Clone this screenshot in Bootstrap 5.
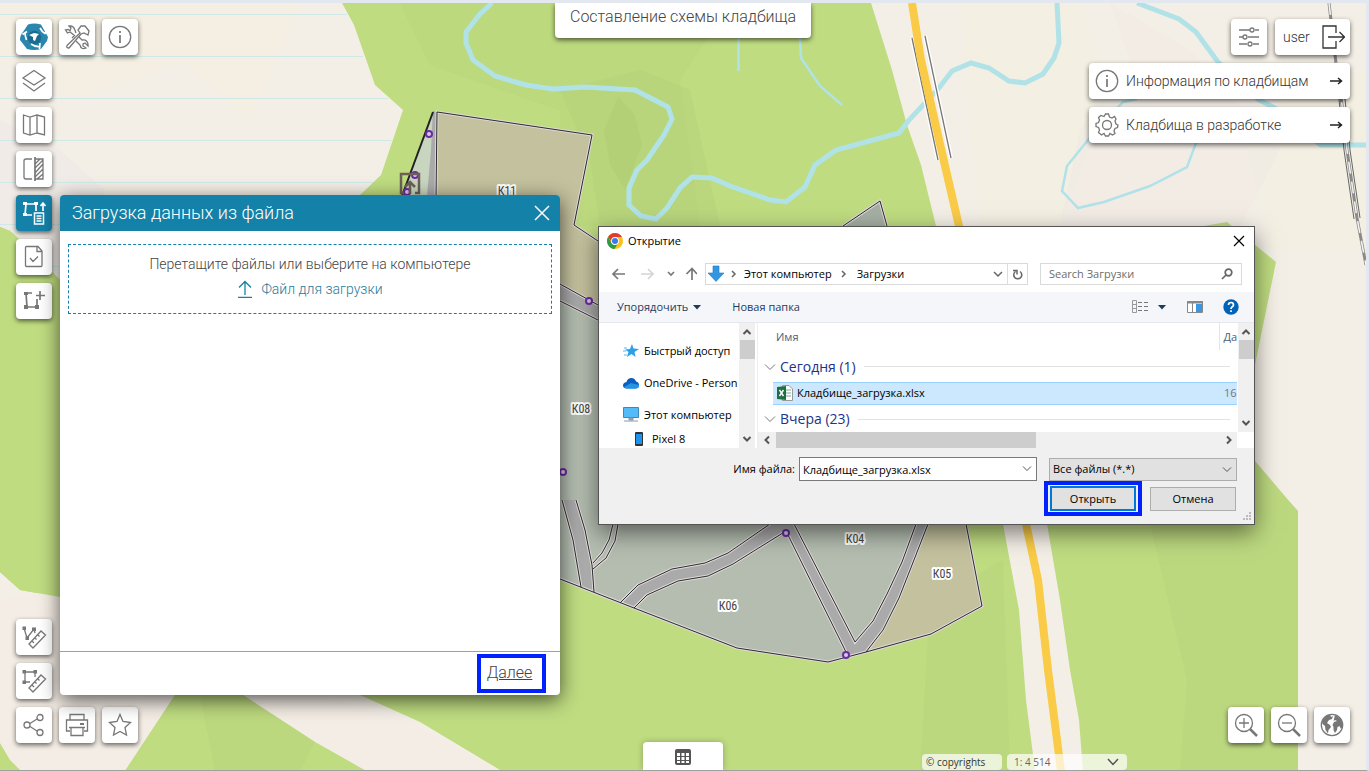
<!DOCTYPE html>
<html lang="ru">
<head>
<meta charset="utf-8">
<meta name="viewport" content="width=device-width, initial-scale=1">
<title>Составление схемы кладбища</title>
<link href="https://cdn.jsdelivr.net/npm/bootstrap@5.3.0/dist/css/bootstrap.min.css" rel="stylesheet">
<style>
:root{--teal:#1481a8;--ink:#444;--mark:#0022ff}
body{margin:0;background:#e9edf3;font-family:Roboto,"Open Sans",sans-serif;font-weight:300;color:var(--ink);font-size:14px;line-height:20px}
button,input,select{font-family:inherit;font-weight:inherit}
.app{height:100vh;min-height:700px;border-top:3px solid #e3e8f0;border-right:3px solid #e3e8f0;border-bottom:1px solid #a0a0a0;overflow:hidden}
.map{position:absolute;inset:0;width:100%;height:100%}
.over{position:relative}
.bar3{display:grid;grid-template-columns:1fr auto 1fr}
.trio{gap:7px}
.tile{min-width:36px;height:36px;padding:0;border:0;border-radius:4px;background:#fff;color:#777;box-shadow:0 2px 5px rgba(0,0,0,.6);display:flex;align-items:center;justify-content:center}
.tile svg{width:26px;height:26px;fill:none;stroke:currentColor;stroke-width:1.3}
.tile.on{background:var(--teal);color:#fff}
.tile.wide{width:261px;justify-content:flex-start;gap:6px;padding:0 7px 0 5px;font-size:14px}
.tile.wide span,.tile.user{color:#333}
.tile.user{width:75px;justify-content:space-between;padding:0 5px 0 8px;font-size:14px}
.heading{background:#fff;height:35px;padding:4px 15px;font-size:16px;line-height:20px;font-weight:300;border-radius:0 0 4px 4px;box-shadow:0 2px 5px rgba(0,0,0,.6)}
.tabgrid{width:80px;height:28px;border:0;background:#fff;border-radius:4px 4px 0 0;box-shadow:0 0 6px rgba(0,0,0,.25)}
.glass{height:16px;border-radius:4px;background:rgba(255,255,255,.7);font:400 10px/16px "Open Sans",sans-serif;color:#333}
.glass select{display:block;border:0;background:transparent;appearance:none;font:400 10px/16px "Open Sans",sans-serif;color:#666;width:120px;height:16px;padding:0 7px}
.panel{position:absolute;left:60px;top:192px;bottom:75px;width:500px;background:#fff;border-radius:4px;box-shadow:0 5px 20px rgba(0,0,0,.65)}
.panel-top{height:36px;background:var(--teal);color:#fff;border-radius:4px 4px 0 0;padding:0 9px 0 12px}
.panel-top h2{font-size:18px;line-height:36px;font-weight:300;margin:0}
.bare{border:0;background:transparent;padding:0;line-height:0;color:inherit}
.drop{margin:13px 8px;height:70px;border:1px dashed var(--teal);font-size:14px;line-height:20px;padding-top:9px}
.drop button{border:0;background:none;color:#1f7a98;font-size:14px;line-height:20px;padding:0;margin-top:5px}
.panel-foot{border-top:1px solid #a0a0a0;height:44px;padding:2px 14px 0 0}
.marked{border:4px solid var(--mark)}
.next{display:block;width:69px;height:39px;font-size:16px;line-height:29px;color:#444;text-align:center;padding-right:4px}
.dlg{position:absolute;left:598px;top:223px;width:657px;border:1px solid #555;background:#fff;color:#000;font:400 11px/16px "Open Sans",sans-serif;box-shadow:0 8px 22px rgba(0,0,0,.5)}
.dlg svg{flex:none;display:block}
.dlg-title{height:36px;padding:0 9px 8px 8px}
.dlg-title span{margin-left:5px}
.dlg-nav{height:22px;padding:0 12px 0 12px}
.box{border:1px solid #d9d9d9;height:22px}
.addr{width:323px;margin-left:8px}
.find{width:202px;margin-left:12px}
.find input{border:0;width:170px;padding:0 0 0 8px;font-size:11px;line-height:20px;height:20px;background:none}
.find input::placeholder{color:#6d6d6d;opacity:1}
.tools{margin-top:7px;height:31px;background:#f4f6f9;border-bottom:1px solid #e5e7ea;padding:0 15px 0 18px;color:#1e3a5f}
.tools button{color:#1e3a5f;line-height:16px}
.dlg-body{height:125px}
.tree{width:140px;padding:17px 0 0 24px;overflow:hidden;white-space:nowrap}
.tree li{display:flex;align-items:center;gap:5px;height:22px;margin-bottom:10px}
.tree li:nth-child(3){margin-bottom:2px}
.tree li.sub{padding-left:8px}
.vbar{width:16px;background:#f0f0f0;display:flex;flex-direction:column;align-items:center}
.vbar i{width:15px;height:19px;background:#cdcdcd;margin-top:1px}
.files{width:480px;margin-left:2px;border-left:1px solid #eee}
.ftab{width:479px;height:109px;table-layout:fixed;border-collapse:collapse}
.ftab td,.ftab th{padding:0;font-weight:400;white-space:nowrap;overflow:hidden}
.ftab th{color:#4c607a;height:27px}
.ftab .cut{border-left:1px solid #e5e5e5;padding-left:4px}
.grp{display:flex;align-items:center;gap:4px;font-size:14px;line-height:20px;color:#1e3287;padding:2px 7px 0 6px}
.grp hr{flex:1;margin:0 0 0 4px;border-color:#ccc;opacity:1;border-top:1px solid #e2e2e2}
.ftab .pick{background:#cce8ff;border-top:1px solid #99d1ff;border-bottom:1px solid #99d1ff}
.hbar{height:16px;background:#f0f0f0;padding:0 4px 0 5px}
.hbar i{width:260px;height:16px;background:#cdcdcd;margin-left:5px}
.dlg-foot{background:#f0f0f0;height:76px;padding:9px 17px 0 0}
.fname{width:238px;height:24px;border:1px solid #7a7a7a;background:#fff}
.fname input{border:0;width:100%;height:22px;padding:0 3px;font-size:11px;background:none}
.ftype{width:188px;height:23px;border:1px solid #adadad;background:#e1e1e1;margin-left:12px}
.ftype select{display:block;appearance:none;border:0;background:none;width:100%;height:21px;padding:0 3px;font-size:11px;color:#000}
.over-chev{position:absolute;right:4px;top:7px;pointer-events:none}
.okc{width:98px;height:35px;padding:1px 2px}
.wbtn{border:1px solid #adadad;background:#e1e1e1;width:86px;height:24px;padding:0;font-size:11px;line-height:16px;color:#000}
.okc .wbtn{border:2px solid #0078d7;width:86px;height:25px}
.grip{position:absolute;right:2px;bottom:2px}
</style>
</head>
<body>
<div class="app position-relative d-flex flex-column justify-content-between">
<svg class="map" viewBox="0 3 1366 767" preserveAspectRatio="xMidYMid slice" aria-hidden="true">
  <rect width="1366" height="771" fill="#f4efe6"/>
  <path d="M0 3H300L250 120 180 60 80 100 0 60z" fill="#f4efe0" opacity=".7"/>
  <path d="M960 3H1080L1110 90 1060 226H980z M1240 120L1366 70V250H1270z" fill="#f3efe1" opacity=".8"/>
  <path d="M1110 3L1190 50 1280 150 1240 226H1060L1080 130 1130 60z" fill="#f0eae4" opacity=".6"/>
  <path d="M0 120L60 150 105 190 60 300 0 240z" fill="#eeeae5" opacity=".7"/>
  <path d="M0 14.500H347M0 56.500H363M0 98.500H388M0 140.500H392M0 182.500H374M0 224.500H60M0 266.500H60" stroke="#cfe9e8" fill="none"/>
  <!-- forest -->
  <path d="M342 3L354 25 375 85 403 110 381 175 359 196 200 400 60 280 18 238 10 231 0 227V572L20 590 60 597 175 695 125 770H366L315 742 243 695H360L420 722 500 770H1035L1026 700 1019 610 1003 524 936 226 921 165 907 125 892 70 871 3z" fill="#bfdc81"/>
  <path d="M60 280L60 590 20 596 0 600V771H125L175 695 243 695 315 742 366 771H500L410 722 320 695 240 650z" fill="#f4ede5"/>
  <path d="M60 280L18 238 10 231 0 227V572L20 590 60 597z M175 695L125 771H366L315 742 243 695z M0 743L10 760 21 771H0z" fill="#bfdc81"/>
  <path d="M1047 524L1060 600 1070 670 1079 720 1083 771H1298V511L1288 500 1255 461 1180 400 1255 365 1276 262 1227 222 1198 227 1040 460z" fill="#bfdc81"/>
  <path d="M560 90L640 70 690 90 720 226H600L590 160z" fill="#b2cf78" opacity=".35"/>
  <path d="M400 3L430 65 500 90 560 110 560 226H700L680 80 730 3z" fill="#b5d078" opacity=".25"/>
  <path d="M618 96L635 115 642 145 625 190 610 165 604 130z" fill="#a9c871" opacity=".35"/>
  <path d="M1150 524L1187 680 1180 771H1298V511L1255 461z M200 695H243L315 742 300 771H215z M930 600L1003 560 1010 771H920z" fill="#b8d27b" opacity=".35"/>
  <!-- water -->
  <g fill="none" stroke="#b0e2e8" stroke-width="5">
    <path d="M492 3L480 14 466 32V43L473 60 495 76 526 85 553 89 585 87 635 90 668 107 672 119 664 135 647 160 637 170 629 188V205L641 216 656 219 667 208 680 188 692 177 712 178 730 186 770 200 786 202 805 187 815 165 836 150 899 133 909 120 925 103 939 88 952 71 971 63 989 68 1009 81 1025 83 1043 74 1054 58 1059 43 1057 3"/>
    <path d="M1137 3L1179 19 1196 32 1218 62 1259 100 1275 108 1321 145H1366"/>
    <path d="M738.500 3V71M798 3L801 58 820 86 842 105M1137 99L1123 102 1088 140 1067 166 1062 191 1078 208 1104 202 1150 186 1187 167 1196 143 1210 110" stroke-width="2.500"/>
  </g>
  <!-- roads -->
  <path d="M912 38L938 160M925 36L951 158" stroke="#fff" stroke-width="4"/>
  <path d="M912 38L938 160M925 36L951 158" stroke="#777" stroke-width="1.300"/>
  <path d="M912 3L921 60 939 140 959 226 1026 524 1038 580 1048 670 1061 771" stroke="#f9cb47" stroke-width="8" fill="none"/>
  <path d="M1329 3L1336 63 1342 105 1347 150 1357 218 1366 265" stroke="#8a8a8a" stroke-width="3" fill="none"/>
  <path d="M1329 3L1336 63 1342 105 1347 150 1357 218 1366 265" stroke="#f4f4f4" stroke-width="1.500" stroke-dasharray="12 8" fill="none"/>
  <path d="M1339 99L1344 150 1354 219M1345 99L1350 150 1360 218" stroke="#666" fill="none"/>
  <!-- cemetery -->
  <path d="M433 111L592 135 574 225 598 241 843 226 880 201 887 226 966 524 982 606 931 634 866 652 828 662 737 648 634 608 560 579 420 240 402 196z" fill="#b4bdb0"/>
  <path d="M433 111L402 196H430z" fill="#c8d6c0"/>
  <path d="M437 112L592 135 574 225 598 241V310L560 290 432 200z M928 524H966L982 606 931 634 866 652 883 630 899 598 912 565z" fill="#c4c19e"/>
  <path d="M880 201L843 226H887z" fill="#a6afa4"/>
  <path d="M433 111L437 112 436 196H427L431 150z M560 284L598 305V320L560 301z M562 500L573 540 581 587 594 592 592 565 585 530 576 500z M620 603L638 585 672 569 705 563 728 553 770 524H794L855 642 873 621 887 594 902 562 916 524H928L912 565 899 598 883 630 866 652 846 657V652L786 531 733 564 708 576 678 581 647 595 634 608z" fill="#aaa"/>
  <g fill="none">
    <g stroke="#ded9d5" stroke-width="3"><path id="ln" d="M436 200L437 112 592 135 574 225 598 241M843 226L880 201 887 226M560 284L598 305M560 301L598 320M562 500L573 540 581 587M576 500L585 530 592 565 594 592M593 569L606 558 615 541 618 524M593 563L602 553 609 540 613 524M620 603L638 585 672 569 705 563 728 553 770 524M794 524L855 642 873 621 887 594 902 562 916 524M634 608L647 595 678 581 708 576 733 564 786 531 846 652M866 652L883 630 899 598 912 565 928 524M560 579L634 608 737 648 828 662 866 652 931 634 982 606 966 524"/></g>
    <use href="#ln" stroke="#2b2b33"/>
    <path d="M433 112L402 196" stroke="#222" stroke-width="2"/>
  </g>
  <g fill="#d9c8ec" stroke="#6a2ca0" stroke-width="2"><circle cx="429" cy="134" r="3"/><circle cx="415" cy="175" r="3"/><circle cx="407" cy="192" r="3"/><circle cx="589" cy="301" r="3"/><circle cx="563" cy="472" r="3"/><circle cx="786" cy="533" r="3"/><circle cx="846" cy="655" r="3"/></g>
  <path d="M404 193H401V174H419V193H415M410 194V181M405 187L410 182 415 187" fill="none" stroke="#6d6055" stroke-width="2.500"/>
  <g font-family="'Liberation Sans Narrow','Roboto Condensed',Roboto,sans-serif" font-size="12" font-weight="400" fill="#444" stroke="#fff" stroke-width="4" stroke-linejoin="round" paint-order="stroke" text-anchor="middle"><text x="507" y="195">К11</text><text x="581" y="413">К08</text><text x="855" y="543">К04</text><text x="942" y="578">К05</text><text x="728" y="610">К06</text></g>
</svg>

<div class="over bar3 px-3">
  <div class="d-flex flex-column gap-2 mt-3 align-items-start">
    <div class="d-flex trio">
      <button class="tile" aria-label="Главная"><svg style="width:28px;height:28px" viewBox="0 0 28 28" stroke="none"><path d="M8 1.500Q14-.500 21 1.500L28 14 27 18 21 26Q14 28 7 26L0 17Q0 12 3 9z" fill="#2b86ad" stroke="none"/><circle cx="14.500" cy="14.500" r="6.800" fill="#1c6c91" stroke="none"/><path d="M2.500 11.500L7 8.500M5 9.500Q5 13 6.500 17M20 5Q22 9 25 10.500L27 8M11 21Q15 24 20 23.500M20 20L19.500 26" stroke="#fff" stroke-width="1.700" fill="none"/><path d="M9 12L14 10 19 11 17 13 15 18 13 17 13 14z" fill="#fff" stroke="none"/></svg></button>
      <button class="tile" aria-label="Инструменты"><svg viewBox="0 0 26 26"><path d="M3 21.500L16 9 14 6 17 2 21 2 25 7 24 11 20 9 17 10 5 24Q2 24 3 21.500z"/><path d="M8 14L10.500 11.500 6 8 3.500 9 1.500 6 4 5.500 6 6.500 7 4 5 2Q9 1 10.500 5L12 9M15 13L18 16Q23 15 24 20L24 22 21 19 19 20 19 22 22 24Q17 26 16 21L12 17"/></svg></button>
      <button class="tile" aria-label="Информация"><svg viewBox="0 0 26 26"><circle cx="13" cy="13" r="10.700"/><path d="M13 11V19M13 7V9" stroke-width="1.700"/></svg></button>
    </div>
    <button class="tile" aria-label="Слои"><svg viewBox="0 0 26 26"><path d="M13 2.500L24 10 13 17 2 10zM2 15L13 23 24 15"/></svg></button>
    <button class="tile" aria-label="Карта"><svg viewBox="0 0 26 26"><path d="M2.500 3L9 5 16 3 23.500 5V23L16 21 9 23 2.500 21zM9 5V23M16 3V21"/></svg></button>
    <button class="tile" aria-label="Сравнение"><svg viewBox="0 0 26 26"><path d="M11 3H5Q3 3 3 5V21Q3 23 5 23H11"/><path d="M14 1V25" stroke-width="1.700"/><path d="M14 3H22V23H14M14 8L19 3M14 12L22 4M14 17L22 8M14 21L22 13M16 23L22 18"/></svg></button>
    <button class="tile on" aria-label="Загрузка из файла"><svg viewBox="0 0 26 26" stroke-width="1.800"><path d="M11 15H4L5 4H15V11M22 11V3M19.500 6L22 3 24.500 6" stroke-width="1.700"/><path d="M2 2H6V5H2zM13 2H17V5H13zM2 13H6V16H2z" fill="currentColor" stroke="none"/><path d="M13.500 13H22.500V24H13.500zM15.500 16H20.500M15.500 18.500H20.500M15.500 21H20.500" stroke-width="1.500"/></svg></button>
    <button class="tile" aria-label="Проверка"><svg viewBox="0 0 26 26"><path d="M17 2.500H5.500Q4.500 2.500 4.500 3.500V21.500Q4.500 22.500 5.500 22.500H20Q21 22.500 21 21.500V7zM16 3V7.500H21M9 14L12 17.500 17 12.500"/></svg></button>
    <button class="tile" aria-label="Добавить"><svg viewBox="0 0 26 26"><path d="M11 5H5L6 19H16V11M19 3V12M15 7.500H24" stroke-width="1.700"/><path d="M3 4H7V7H3zM3 17H7V21H3zM14 17H18V21H14z" fill="currentColor" stroke="none"/></svg></button>
  </div>
  <h1 class="heading mb-0 align-self-start">Составление схемы кладбища</h1>
  <div class="d-flex flex-column gap-2 mt-3 align-items-end">
    <div class="d-flex gap-2">
      <button class="tile" aria-label="Настройки"><svg viewBox="0 0 26 26"><path d="M3 6H14M19 6H23M3 13H7M12 13H23M3 20H11M17 20H23"/><circle cx="16" cy="6" r="2"/><circle cx="9" cy="13" r="2"/><circle cx="14" cy="20" r="2"/></svg></button>
      <button class="tile user">user<svg viewBox="0 0 26 26"><path d="M17 9V2H4V24H17V17M9 13H25M20.500 8L25.500 13 20.500 18"/></svg></button>
    </div>
    <button class="tile wide"><svg viewBox="0 0 26 26"><circle cx="13" cy="13" r="10.700"/><path d="M13 11V19M13 7V9" stroke-width="1.700"/></svg><span>Информация по кладбищам</span><svg class="ms-auto" style="width:13px;height:12px;color:#222" viewBox="0 0 13 12"><path d="M0 6H11M8 3L11.500 6 8 9" stroke-width="1.500"/></svg></button>
    <button class="tile wide"><svg viewBox="0 0 26 26"><circle cx="13" cy="13" r="4.500"/><path d="M11.500 2H14.500L15.500 5 18 6 20.500 4.500 22 7 21 9 22 12 24 13 23.500 15.500 21 16.500 20 19 21 21.500 18.500 23 16 21.500 14.500 24H11.500L10 21.500 7.500 23 4.500 20.500 5.500 18 4.500 15.500 2 14.500V11.500L4.500 10.500 5.500 8 4.500 5.500 7 3.500 10 4.500z"/></svg><span>Кладбища в разработке</span><svg class="ms-auto" style="width:13px;height:12px;color:#222" viewBox="0 0 13 12"><path d="M0 6H11M8 3L11.500 6 8 9" stroke-width="1.500"/></svg></button>
  </div>
</div>

<div class="over bar3 px-3 align-items-end">
  <div class="d-flex flex-column gap-2 align-items-start" style="padding-bottom:27px">
    <button class="tile" aria-label="Измерить длину"><svg viewBox="0 0 26 26"><path d="M3 4L6 14 13 5 14 9M8 20L20 7 24.500 11 12 24zM11 17L13 19M14 14L15.500 15.500M17 11L18.500 12.500" /><path d="M1.500 2.500H5V6H1.500zM4.500 12.500H8V16H4.500zM11 3.500H15V7H11z" fill="currentColor" stroke="none"/></svg></button>
    <button class="tile" aria-label="Измерить площадь"><svg viewBox="0 0 26 26"><path d="M9 14H4V4H14V9M8 20L20 7 24.500 11 12 24zM11 17L13 19M14 14L15.500 15.500M17 11L18.500 12.500"/><path d="M1.500 2H5V5.500H1.500zM12.500 2H16V5.500H12.500zM1.500 12.500H5V16H1.500z" fill="currentColor" stroke="none"/></svg></button>
    <div class="d-flex trio">
      <button class="tile" aria-label="Поделиться"><svg viewBox="0 0 26 26"><circle cx="6" cy="13" r="3"/><circle cx="19" cy="5.500" r="3"/><circle cx="19" cy="20.500" r="3"/><path d="M9 11.500L16 7M9 14.500L16 19"/></svg></button>
      <button class="tile" aria-label="Печать"><svg viewBox="0 0 26 26"><path d="M6 8V2.500H20V8M6 19H2.500V8H23.500V19H20M7 15.500H19V23.500H7zM5 15.500H21"/><path d="M16 12H20" stroke-width="2"/></svg></button>
      <button class="tile" aria-label="Избранное"><svg viewBox="0 0 26 26"><path d="M13 2.500L16 9.500 23.500 10.500 18 15.500 19.500 23 13 19.500 6.500 23 8 15.500 2.500 10.500 10 9.500z"/></svg></button>
    </div>
  </div>
  <button class="tabgrid" aria-label="Таблица"><svg width="16" height="16" viewBox="0 0 16 16"><rect width="16" height="16" rx="2" fill="#555"/><path d="M2 4H5V7H2zM6.500 4H9.500V7H6.500zM11 4H14V7H11zM2 8H5V11H2zM6.500 8H9.500V11H6.500zM11 8H14V11H11zM2 12H5V14H2zM6.500 12H9.500V14H6.500zM11 12H14V14H11z" fill="#fff"/></svg></button>
  <div class="d-flex justify-content-end align-items-end">
    <div class="glass" style="width:80px;padding-left:4px">© copyrights</div>
    <div class="glass position-relative" style="margin:0 101px 0 5px"><select aria-label="Масштаб"><option>1: 4 514</option></select><svg class="over-chev" style="top:4px;right:8px" width="12" height="8"><path d="M1 1L6 6.500 11 1" fill="none" stroke="#555" stroke-width="1.500"/></svg></div>
    <div class="d-flex trio" style="padding-bottom:27px">
      <button class="tile" aria-label="Приблизить"><svg viewBox="0 0 26 26"><circle cx="11" cy="11" r="8.500"/><path d="M11 6V16M6 11H16"/><path d="M17 17L24 24" stroke-width="2.500"/></svg></button>
      <button class="tile" aria-label="Отдалить"><svg viewBox="0 0 26 26"><circle cx="11" cy="11" r="8.500"/><path d="M6 11H16"/><path d="M17 17L24 24" stroke-width="2.500"/></svg></button>
      <button class="tile" aria-label="Вся карта"><svg viewBox="0 0 26 26"><circle cx="13" cy="13" r="10.700"/><path d="M3 9L7 4 11 2.500 12 5 14 4 13 7 10 8 8 11 11 13 12 15 9.500 18 9 21.500 6.500 18 6 14 3.500 12zM16 3L22 7 24 14 22 17 20.500 14 18.500 15 18 18 16 21 14.500 18 14.500 15 13.500 13 15 10 18 9 16 8 14.500 9z" fill="currentColor" stroke="none"/></svg></button>
    </div>
  </div>
</div>

<section class="panel d-flex flex-column">
  <div class="panel-top d-flex justify-content-between align-items-center"><h2>Загрузка данных из файла</h2><button class="bare" aria-label="Закрыть"><svg width="18" height="18"><path d="M2 2L16 16M16 2L2 16" stroke="#fff" stroke-width="1.500"/></svg></button></div>
  <div class="drop text-center"><div>Перетащите файлы или выберите на компьютере</div>
    <button class="d-inline-flex align-items-center gap-2"><svg width="16" height="18" fill="none" stroke="#1481a8" stroke-width="1.300"><path d="M8 15V1.500M2 7.500L8 1.500 14 7.500M1 17.300H15"/></svg>Файл для загрузки</button></div>
  <div class="panel-foot mt-auto d-flex justify-content-end"><a href="#" class="next marked">Далее</a></div>
</section>

<section class="dlg">
  <div class="dlg-title d-flex align-items-center">
    <svg width="16" height="16" viewBox="0 0 16 16"><circle cx="8" cy="8" r="8" fill="#fbc116"/><path d="M1.100 4A8 8 0 0 1 14.900 4H8L5 9.500z" fill="#e33b2e"/><path d="M1.100 4A8 8 0 0 0 7.500 16L11.200 10 8 11.500 4.500 10z" fill="#2c9a46"/><circle cx="8" cy="8" r="3.900" fill="#fff"/><circle cx="8" cy="8" r="3" fill="#3a79ec"/></svg>
    <span>Открытие</span>
    <button class="bare ms-auto" aria-label="Закрыть"><svg width="12" height="12"><path d="M1 1L11 11M11 1L1 11" stroke="#000" stroke-width="1.200"/></svg></button>
  </div>
  <div class="dlg-nav d-flex align-items-center">
    <svg width="86" height="22" fill="none" stroke-width="1.700"><path d="M2 11H14M7 6L2 11 7 16" stroke="#777"/><path d="M30 11H42M37 6L42 11 37 16" stroke="#d5d5d5"/><path d="M57 9L60 12 63 9" stroke="#777"/><path d="M81 17V5.500M75.500 11L81 5.500 86 11" stroke="#777"/></svg>
    <div class="addr box d-flex align-items-center">
      <svg width="20" height="18"><path d="M7 1H13V8H18L10 16.500 2 8H7z" fill="#3296e0" stroke="#2278c0" stroke-width=".6"/></svg>
      <svg width="18" height="10" fill="none" stroke="#666" stroke-width="1.500"><path d="M6 2L9 5 6 8"/></svg><span>Этот компьютер</span>
      <svg width="25" height="10" fill="none" stroke="#666" stroke-width="1.500"><path d="M10 2L13 5 10 8"/></svg><span>Загрузки</span>
      <svg class="ms-auto" width="44" height="20" fill="none" stroke="#666" stroke-width="1.500"><path d="M11 8L15 12 19 8"/><path d="M24.500 0V20" stroke="#ddd" stroke-width="1"/><path d="M37 7.500A4 4 0 1 1 32.500 7.500M30 6.500H34V10.500" /></svg>
    </div>
    <div class="find box d-flex align-items-center"><input type="search" aria-label="Поиск" placeholder="Search Загрузки"><svg class="ms-auto me-2" width="12" height="12" fill="none" stroke="#666" stroke-width="1.700"><circle cx="7.500" cy="4.500" r="3.300"/><path d="M5 7L1 11"/></svg></div>
  </div>
  <div class="tools d-flex align-items-center">
    <button class="bare">Упорядочить</button><svg class="ms-1" width="10" height="6"><path d="M1 1H9L5 5.500z" fill="#1e3a5f"/></svg>
    <button class="bare" style="margin-left:30px">Новая папка</button>
    <svg class="ms-auto" width="38" height="14" fill="none"><path d="M.500.500H4.500V12.500H.500zM.500 4.500H4.500M.500 8.500H4.500" stroke="#999"/><path d="M6 2.500H10M12 2.500H16M6 6.500H10M12 6.500H16M6 10.500H10M12 10.500H16" stroke="#777"/><path d="M26 5H34L30 9.500z" fill="#1e3a5f"/></svg>
    <svg style="margin-left:17px" width="16" height="12"><path d="M.500.500H15.500V11.500H.500zM5.500 2V11" fill="#fff" stroke="#888"/><path d="M0 0H16V2.500H0z" fill="#888"/><path d="M9 3H15V11H9z" fill="#3996e0"/></svg>
    <svg style="margin-left:20px" width="16" height="16"><circle cx="8" cy="8" r="7.700" fill="#0063b8"/><path d="M5.500 6Q5.500 3.500 8 3.500T10.500 6Q10.500 7 9 8 8 8.700 8 10M8 11.300V13" fill="none" stroke="#fff" stroke-width="1.700"/></svg>
  </div>
  <div class="dlg-body d-flex">
    <ul class="tree list-unstyled mb-0">
      <li><svg width="16" height="14"><path d="M9 0L10.500 4.500 16 5 11.500 8 12.500 13 8.500 10 4 13 5.500 8 2 5.500 7 5z" fill="#2b9fe8"/><path d="M1 4H4M0 7H3M1 11H4" stroke="#5ab8f4"/></svg>Быстрый доступ</li>
      <li><svg width="16" height="12"><path d="M4 11.500Q0 11.500 0 8.500T3.500 5Q4.500 1 8.500 1 12 1 13 4.500 16 5 16 8T13 11.500z" fill="#0a5fc0"/><path d="M1 10L8 6 16 8Q16 11.500 13 11.500H4Q2 11.500 1 10z" fill="#2595e2"/></svg>OneDrive - Person</li>
      <li><svg width="16" height="16"><path d="M.500.500H15.500V10.500H.500z" fill="#53bcf8" stroke="#3d88b5"/><path d="M6 11H10V13H6zM1 14H15" fill="#9ac" stroke="#89a"/></svg>Этот компьютер</li>
      <li class="sub"><svg width="16" height="14"><rect x="4" width="8" height="14" rx="1" fill="#333"/><path d="M5 2H11V12H5z" fill="#1c93ed"/></svg>Pixel 8</li>
    </ul>
    <div class="vbar"><svg width="10" height="16" fill="none" stroke="#555" stroke-width="2"><path d="M1.500 11L5 7.500 8.500 11"/></svg><i></i><svg class="mt-auto" width="10" height="18" fill="none" stroke="#555" stroke-width="2"><path d="M1.500 7L5 10.500 8.500 7"/></svg></div>
    <div class="files">
      <table class="ftab"><colgroup><col style="width:15px"><col><col style="width:18px"></colgroup>
        <tr><th></th><th style="padding-left:3px">Имя</th><th class="cut">Да</th></tr>
        <tr style="height:32px"><td colspan="3"><div class="grp"><svg width="12" height="8" fill="none" stroke="#777"><path d="M1 1.500L6 6.500 11 1.500"/></svg>Сегодня (1)<hr></div></td></tr>
        <tr style="height:22px"><td></td><td class="pick"><div class="d-flex align-items-center ps-1 gap-1"><svg width="16" height="16"><path d="M5.500.500H12L15.500 4V15.500H5.500z" fill="#fff" stroke="#999"/><path d="M9 5H14M9 8H14M9 11H14" stroke="#7a9"/><path d="M0 2L9 1V15L0 14z" fill="#1d7044"/><path d="M2.500 5L6.500 11M6.500 5L2.500 11" stroke="#fff" stroke-width="1.400"/></svg>Кладбище_загрузка.xlsx</div></td><td class="pick" style="color:#777;padding-left:5px">16</td></tr>
        <tr style="height:28px"><td colspan="3"><div class="grp"><svg width="12" height="8" fill="none" stroke="#777"><path d="M1 1.500L6 6.500 11 1.500"/></svg>Вчера (23)<hr></div></td></tr>
      </table>
      <div class="hbar d-flex align-items-center"><svg width="8" height="10" fill="none" stroke="#555" stroke-width="2"><path d="M6 1.500L2.500 5 6 8.500"/></svg><i></i><svg class="ms-auto" width="8" height="10" fill="none" stroke="#555" stroke-width="2"><path d="M2 1.500L5.500 5 2 8.500"/></svg></div>
    </div>
    <div class="vbar" style="height:109px;margin-left:1px"><svg width="10" height="16" fill="none" stroke="#555" stroke-width="2"><path d="M1.500 11L5 7.500 8.500 11"/></svg><i></i><svg class="mt-auto" width="10" height="18" fill="none" stroke="#555" stroke-width="2"><path d="M1.500 7L5 10.500 8.500 7"/></svg></div>
  </div>
  <div class="dlg-foot">
    <div class="d-flex justify-content-end align-items-center" style="height:24px"><label for="fn" class="me-1">Имя файла:</label>
      <div class="fname position-relative"><input id="fn" value="Кладбище_загрузка.xlsx"><svg class="over-chev" width="10" height="8" fill="none" stroke="#555"><path d="M1 1.500L5 5.500 9 1.500"/></svg></div>
      <div class="ftype position-relative"><select aria-label="Тип файлов"><option>Все файлы (*.*)</option></select><svg class="over-chev" width="10" height="8" fill="none" stroke="#555"><path d="M1 1.500L5 5.500 9 1.500"/></svg></div></div>
    <div class="d-flex justify-content-end align-items-center gap-2" style="padding-right:1px"><div class="okc marked"><button class="wbtn d-block">Открыть</button></div><button class="wbtn">Отмена</button></div>
  </div>
  <svg class="grip" width="10" height="10"><path d="M7 0H9V2H7zM4 3H6V5H4zM7 3H9V5H7zM1 6H3V8H1zM4 6H6V8H4zM7 6H9V8H7z" fill="#bbb"/></svg>
</section>
</div>
<script src="https://cdn.jsdelivr.net/npm/bootstrap@5.3.0/dist/js/bootstrap.bundle.min.js"></script>
</body>
</html>
